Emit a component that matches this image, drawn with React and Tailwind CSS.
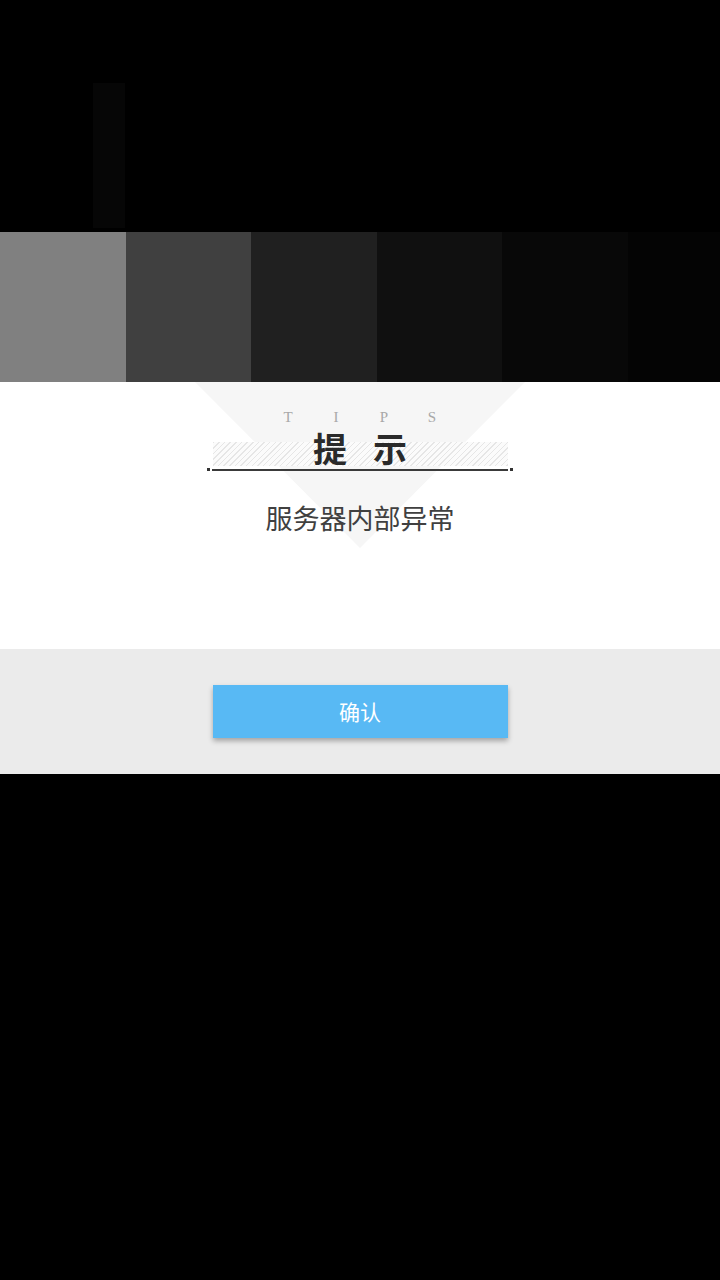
import React from 'react'

const swatches = ['#808080', '#404040', '#202020', '#101010', '#080808', '#040404']

const TipsDialog = ({ message, onConfirm }) => {
  return (
    <div className="relative w-full">
      <div className="relative h-[267px] overflow-hidden bg-white">
        {/* faint inverted triangle behind the title */}
        <div className="absolute left-[195px] top-0 h-[166px] w-[330px] bg-[#f6f6f6] [clip-path:polygon(0_0,100%_0,50%_100%)]" />
        <div className="relative flex flex-col items-center pt-[25px]">
          <div className="flex font-['Liberation_Serif',serif] text-[15px] leading-[20px] text-[#a8a8a8]">
            <span className="w-[48px] text-center">T</span>
            <span className="w-[48px] text-center">I</span>
            <span className="w-[48px] text-center">P</span>
            <span className="w-[48px] text-center">S</span>
          </div>
          <div className="relative mt-[1px] flex h-[40px] w-[305px] justify-center">
            <div className="absolute bottom-[2px] left-[5px] right-[5px] h-[24px] bg-[repeating-linear-gradient(135deg,#e6e6e6_0px,#e6e6e6_1px,#fbfbfb_1px,#fbfbfb_4px)]" />
            <h1 className="relative pl-[26px] font-['Noto_Sans_CJK_SC',sans-serif] text-[34px] font-bold leading-[40px] tracking-[26px] text-[#2a2a2a]">
              提示
            </h1>
          </div>
          <div className="flex w-[306px] items-center">
            <span className="h-[3px] w-[3px] bg-[#333]" />
            <span className="mx-[2px] h-[2px] flex-1 bg-[#3a3a3a]" />
            <span className="h-[3px] w-[3px] bg-[#333]" />
          </div>
          <p className="mt-[30px] font-['Noto_Sans_CJK_SC',sans-serif] text-[27px] leading-[34px] text-[#404040]">
            {message}
          </p>
        </div>
      </div>
      <div className="flex h-[125px] items-center justify-center bg-[#ebebeb]">
        <button
          onClick={onConfirm}
          className="h-[53px] w-[295px] bg-[#58b9f4] font-['Noto_Sans_CJK_SC',serif] text-[21px] text-white shadow-[0_3px_5px_rgba(0,0,0,0.3)]"
        >
          确认
        </button>
      </div>
    </div>
  )
}

const App = () => {
  return (
    <main className="flex min-h-[1280px] w-[720px] flex-col overflow-hidden bg-black">
      <div className="relative h-[232px]">
        <div className="absolute left-[93px] top-[83px] h-[145px] w-[32px] bg-[#060606]" />
      </div>
      <div className="flex h-[150px]">
        {swatches.map((c) => (
          <div key={c} className="h-full w-[125.5px] shrink-0" style={{ backgroundColor: c }} />
        ))}
      </div>
      <TipsDialog message="服务器内部异常" onConfirm={() => {}} />
    </main>
  )
}

export default App
